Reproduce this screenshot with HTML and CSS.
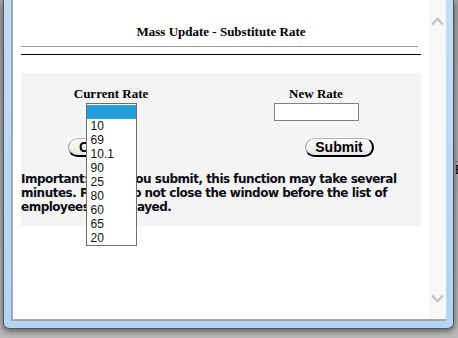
FILE: index.html
```html
<!DOCTYPE html>
<html lang="en">
<head>
    <meta charset="UTF-8">
    <meta name="viewport" content="width=device-width, initial-scale=1.0">
    <title>Mass Update - Substitute Rate</title>
    <link rel="stylesheet" href="styles.css">
</head>
<body>
    <div class="window">
        <div class="client">
            <div class="page">
                <h1 class="title">Mass Update - Substitute Rate</h1>
                <div class="rule-gray"></div>
                <div class="rule-black"></div>

                <div class="panel">
                    <div class="fields">
                        <div class="field">
                            <label>Current Rate</label>
                            <div class="select-wrap">
                                <div class="select-box"></div>
                                <!-- open dropdown -->
                                <ul class="select-list">
                                    <li class="selected">&nbsp;</li>
                                    <li>10</li>
                                    <li>69</li>
                                    <li>10.1</li>
                                    <li>90</li>
                                    <li>25</li>
                                    <li>80</li>
                                    <li>60</li>
                                    <li>65</li>
                                    <li>20</li>
                                </ul>
                            </div>
                        </div>
                        <div class="field">
                            <label>New Rate</label>
                            <input type="text" class="rate-input">
                        </div>
                    </div>

                    <div class="buttons">
                        <span class="btn-img"><span class="btn">Cancel</span></span>
                        <span class="btn-img"><span class="btn">Submit</span></span>
                    </div>

                    <p class="notice">Important: Once you submit, this function may take several minutes. Please do not close the window before the list of employees is displayed.</p>
                </div>
            </div>

            <div class="scrollbar">
                <svg width="17" height="9" viewBox="0 0 17 9"><polyline points="3,7.5 8.5,2 14,7.5" fill="none" stroke="#c3c3c3" stroke-width="2.4"/></svg>
                <svg width="17" height="9" viewBox="0 0 17 9"><polyline points="3,1.5 8.5,7 14,1.5" fill="none" stroke="#c3c3c3" stroke-width="2.4"/></svg>
            </div>
        </div>
    </div>
    <span class="desk-line"></span>
    <span class="desk-e">E</span>
</body>
</html>
```

FILE: styles.css
```css
* {
    box-sizing: border-box;
}

body {
    margin: 0;
    width: 458px;
    height: 338px;
    overflow: hidden;
    position: relative;
    background: linear-gradient(to bottom, #a4a4a4, #b9b9b9);
    font-family: "Liberation Serif", serif;
    color: #000;
}

.window {
    margin-left: 3px;
    width: 451px;
    height: 329px;
    padding: 0 7px 7px;
    background: linear-gradient(to bottom, #c2dcf4, #b4d4f2);
    border: 1px solid #4b5967;
    border-top: none;
    border-radius: 0 0 6px 6px;
    box-shadow: 0 2px 6px rgba(0, 0, 0, 0.55);
}

.client {
    display: flex;
    height: 100%;
    background: #fff;
    border: 2px solid #9ea8b2;
    border-top: none;
}

.page {
    flex: 1;
    padding: 24px 8px 0;
}

.title {
    margin: 0;
    font-size: 13px;
    line-height: 15px;
    font-weight: bold;
    text-align: center;
}

.rule-gray {
    width: 397px;
    height: 1px;
    margin-top: 7px;
    background: #9a9a9a;
}

.rule-black {
    width: 400px;
    height: 1px;
    margin-top: 7px;
    background: #000;
}

.panel {
    width: 400px;
    margin-top: 18px;
    padding: 13px 0 12px;
    background: #f4f4f4;
}

.fields {
    display: flex;
    gap: 55px;
    padding-left: 15px;
}

.field {
    width: 150px;
    display: flex;
    flex-direction: column;
    align-items: center;
}

.field label {
    font-size: 13px;
    line-height: 15px;
    font-weight: bold;
}

.select-wrap {
    position: relative;
    width: 51px;
    height: 18px;
    margin-top: 2px;
}

.select-box {
    height: 18px;
    border: 1px solid #7a7a7a;
    background: #fff;
}

.select-list {
    position: absolute;
    top: 0;
    left: 0;
    z-index: 2;
    width: 51px;
    margin: 0;
    padding: 1px 0 0;
    list-style: none;
    background: #fff;
    border: 1px solid #6d6d6d;
    font-family: "Liberation Sans", Arial, sans-serif;
    font-size: 12px;
}

.select-list li {
    height: 14px;
    line-height: 14px;
    padding-left: 4px;
    color: #111;
}

.select-list li.selected {
    background: #26a0da;
}

.rate-input {
    width: 85px;
    height: 18px;
    margin-top: 2px;
    border: 1px solid #7f7f7f;
    background: #fff;
}

.buttons {
    display: flex;
    justify-content: space-between;
    padding: 0 47px;
    margin-top: 16px;
}

.btn-img {
    width: 69px;
    height: 20px;
    padding-top: 1px;
    background: #fff;
}

.btn {
    display: block;
    height: 19px;
    border-top: 1px solid #b0b0b0;
    border-left: 1px solid #9a9a9a;
    border-right: 2px solid #000;
    border-bottom: 2px solid #000;
    border-radius: 10px;
    background: linear-gradient(to bottom, #ffffff, #e6e6e6);
    font-family: "Liberation Sans", Arial, sans-serif;
    font-size: 14px;
    font-weight: bold;
    line-height: 16px;
    text-align: center;
}

.notice {
    margin: 15px 0 0;
    font-family: "DejaVu Sans", Verdana, sans-serif;
    font-size: 12px;
    line-height: 14px;
    font-weight: bold;
    letter-spacing: -0.5px;
    color: #0a0a14;
}

.scrollbar {
    width: 17px;
    display: flex;
    flex-direction: column;
    justify-content: space-between;
    padding: 17px 0 16px;
    background: #f7f7f7;
}

.scrollbar svg {
    display: block;
}

.desk-line {
    position: absolute;
    left: 454px;
    top: 161px;
    width: 4px;
    height: 1px;
    background: #707070;
}

.desk-e {
    position: absolute;
    left: 455px;
    top: 162px;
    font-family: "Liberation Sans", Arial, sans-serif;
    font-size: 13px;
    line-height: 15px;
    color: #000;
}
```
